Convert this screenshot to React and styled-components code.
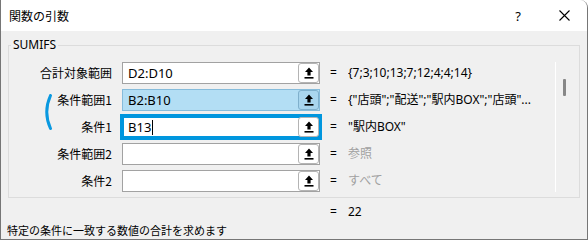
import React from 'react';
import styled, { createGlobalStyle } from 'styled-components';

const Global = createGlobalStyle`
  html, body { margin: 0; padding: 0; background: #ffffff; }
  body { font-family: "Noto Sans", "Noto Sans CJK JP", sans-serif; color: #000; }
  * { box-sizing: border-box; }
`;

const Window = styled.div`
  width: 588px;
  height: 240px;
  background: #f0f0f0;
  border: 1px solid #767676;
  border-top: none;
  border-top-right-radius: 8px;
  display: flex;
  flex-direction: column;
  overflow: hidden;
`;

const TitleBar = styled.div`
  height: 31px;
  flex: none;
  background: #ffffff;
  display: flex;
  align-items: center;
  padding-left: 8px;
`;

const Title = styled.div`
  flex: 1;
  font-family: "Noto Sans CJK JP", sans-serif;
  font-size: 12px;
  line-height: 16px;
`;

const TitleButton = styled.div`
  width: 46px;
  height: 31px;
  display: flex;
  align-items: center;
  justify-content: center;
  font-family: "Noto Sans", sans-serif;
  font-size: 13px;
`;

const Group = styled.fieldset`
  margin: 6px 7px 0 7px;
  padding: 9px 0 5px 0;
  border: 1px solid #dcdcdc;
  min-width: 0;
  flex: none;
`;

const Legend = styled.legend`
  margin-left: 2px;
  padding: 0 2px;
  font-family: "Noto Sans", sans-serif;
  font-size: 12px;
  line-height: 16px;
`;

const GroupBody = styled.div`
  display: flex;
  height: 130px;
`;

const Rows = styled.div`
  position: relative;
  width: 546px;
  display: flex;
  flex-direction: column;
  gap: 5px;
`;

const Row = styled.div`
  display: flex;
  align-items: center;
  height: 22px;
`;

const Label = styled.div`
  width: 103px;
  text-align: right;
  font-family: "Noto Sans CJK JP", sans-serif;
  font-size: 12px;
  line-height: 16px;
  margin-right: 10px;
`;

const Field = styled.div`
  width: 198px;
  height: 22px;
  display: flex;
  align-items: center;
  padding-left: 4px;
  background: ${p => (p.$selected ? '#b3def4' : '#ffffff')};
  border: 1px solid ${p => (p.$focused ? '#0096de' : p.$selected ? '#86bcdb' : '#a2a2a2')};
  box-shadow: ${p => (p.$focused ? '0 0 0 2px #0096de, inset 0 0 0 1px #0096de' : 'none')};
  font-family: "Noto Sans", sans-serif;
  font-size: 13px;
  line-height: 16px;
`;

const FieldText = styled.div`
  flex: 1;
  display: flex;
  align-items: center;
  padding-left: 1px;
`;

const Caret = styled.span`
  display: inline-block;
  width: 1px;
  height: 15px;
  background: #000;
  margin-left: 1px;
`;

const RefButton = styled.div`
  width: 21px;
  height: 20px;
  margin-right: 0px;
  border: 1px solid ${p => (p.$selected ? '#7fb0cc' : '#b4b4b4')};
  border-radius: 3px;
  background: ${p => (p.$selected ? '#a9d6ee' : '#ffffff')};
  display: flex;
  align-items: center;
  justify-content: center;
`;

const Eq = styled.div`
  width: 18px;
  margin-left: 10px;
  font-family: "Noto Sans", sans-serif;
  font-size: 12px;
  line-height: 16px;
`;

const Value = styled.div`
  flex: 1;
  white-space: nowrap;
  overflow: hidden;
  font-family: "Noto Sans", "Noto Sans CJK JP", sans-serif;
  font-size: 12px;
  line-height: 16px;
  color: ${p => (p.$muted ? '#a0a0a0' : '#000000')};
`;

const Bracket = styled.svg`
  position: absolute;
  left: 32px;
  top: 32px;
`;

const ScrollTrack = styled.div`
  width: 24px;
  border-left: 1px solid #ffffff;
  padding: 17px 0 0 7px;
`;

const Thumb = styled.div`
  width: 3px;
  height: 17px;
  background: #878787;
  border-radius: 1px;
`;

const ResultRow = styled.div`
  display: flex;
  align-items: center;
  margin-top: 6px;
  padding-left: 329px;
  height: 16px;
`;

const Description = styled.div`
  margin-top: auto;
  padding-left: 6px;
  height: 17px;
  font-family: "Noto Sans CJK JP", sans-serif;
  font-size: 11px;
  line-height: 16px;
`;

const ArrowIcon = () => (
  <svg width="10" height="12" viewBox="0 0 10 12">
    <path d="M5 0.5 L9 5 L6.6 5 L6.6 8.6 L3.4 8.6 L3.4 5 L1 5 Z" fill="#000" />
    <rect x="0.5" y="10" width="9" height="1.6" fill="#000" />
  </svg>
);

const CloseIcon = () => (
  <svg width="11" height="11" viewBox="0 0 11 11">
    <path d="M0.5 0.5 L10.5 10.5 M10.5 0.5 L0.5 10.5" stroke="#000" strokeWidth="1.1" />
  </svg>
);

const rows = [
  { label: '合計対象範囲', text: 'D2:D10', value: '{7;3;10;13;7;12;4;4;14}' },
  { label: '条件範囲1', text: 'B2:B10', value: '{"店頭";"配送";"駅内BOX";"店頭"...', selected: true },
  { label: '条件1', text: 'B13', value: '"駅内BOX"', focused: true },
  { label: '条件範囲2', text: '', value: '参照', muted: true },
  { label: '条件2', text: '', value: 'すべて', muted: true },
];

export default function App() {
  return (
    <>
      <Global />
      <Window>
        <TitleBar>
          <Title>関数の引数</Title>
          <TitleButton>?</TitleButton>
          <TitleButton><CloseIcon /></TitleButton>
        </TitleBar>
        <Group>
          <Legend>SUMIFS</Legend>
          <GroupBody>
            <Rows>
              {rows.map(r => (
                <Row key={r.label}>
                  <Label>{r.label}</Label>
                  <Field $selected={r.selected} $focused={r.focused}>
                    <FieldText>
                      {r.text}
                      {r.focused && <Caret />}
                    </FieldText>
                    <RefButton $selected={r.selected}><ArrowIcon /></RefButton>
                  </Field>
                  <Eq>=</Eq>
                  <Value $muted={r.muted}>{r.value}</Value>
                </Row>
              ))}
              <Bracket width="12" height="36" viewBox="0 0 12 36">
                <path d="M9.5 1.5 Q2 18 9.5 34.5" stroke="#0a99e0" strokeWidth="3" fill="none" strokeLinecap="round" />
              </Bracket>
            </Rows>
            <ScrollTrack><Thumb /></ScrollTrack>
          </GroupBody>
        </Group>
        <ResultRow>
          <Eq as="span" style={{ marginLeft: 0 }}>=</Eq>
          <Value>22</Value>
        </ResultRow>
        <Description>特定の条件に一致する数値の合計を求めます</Description>
      </Window>
    </>
  );
}
